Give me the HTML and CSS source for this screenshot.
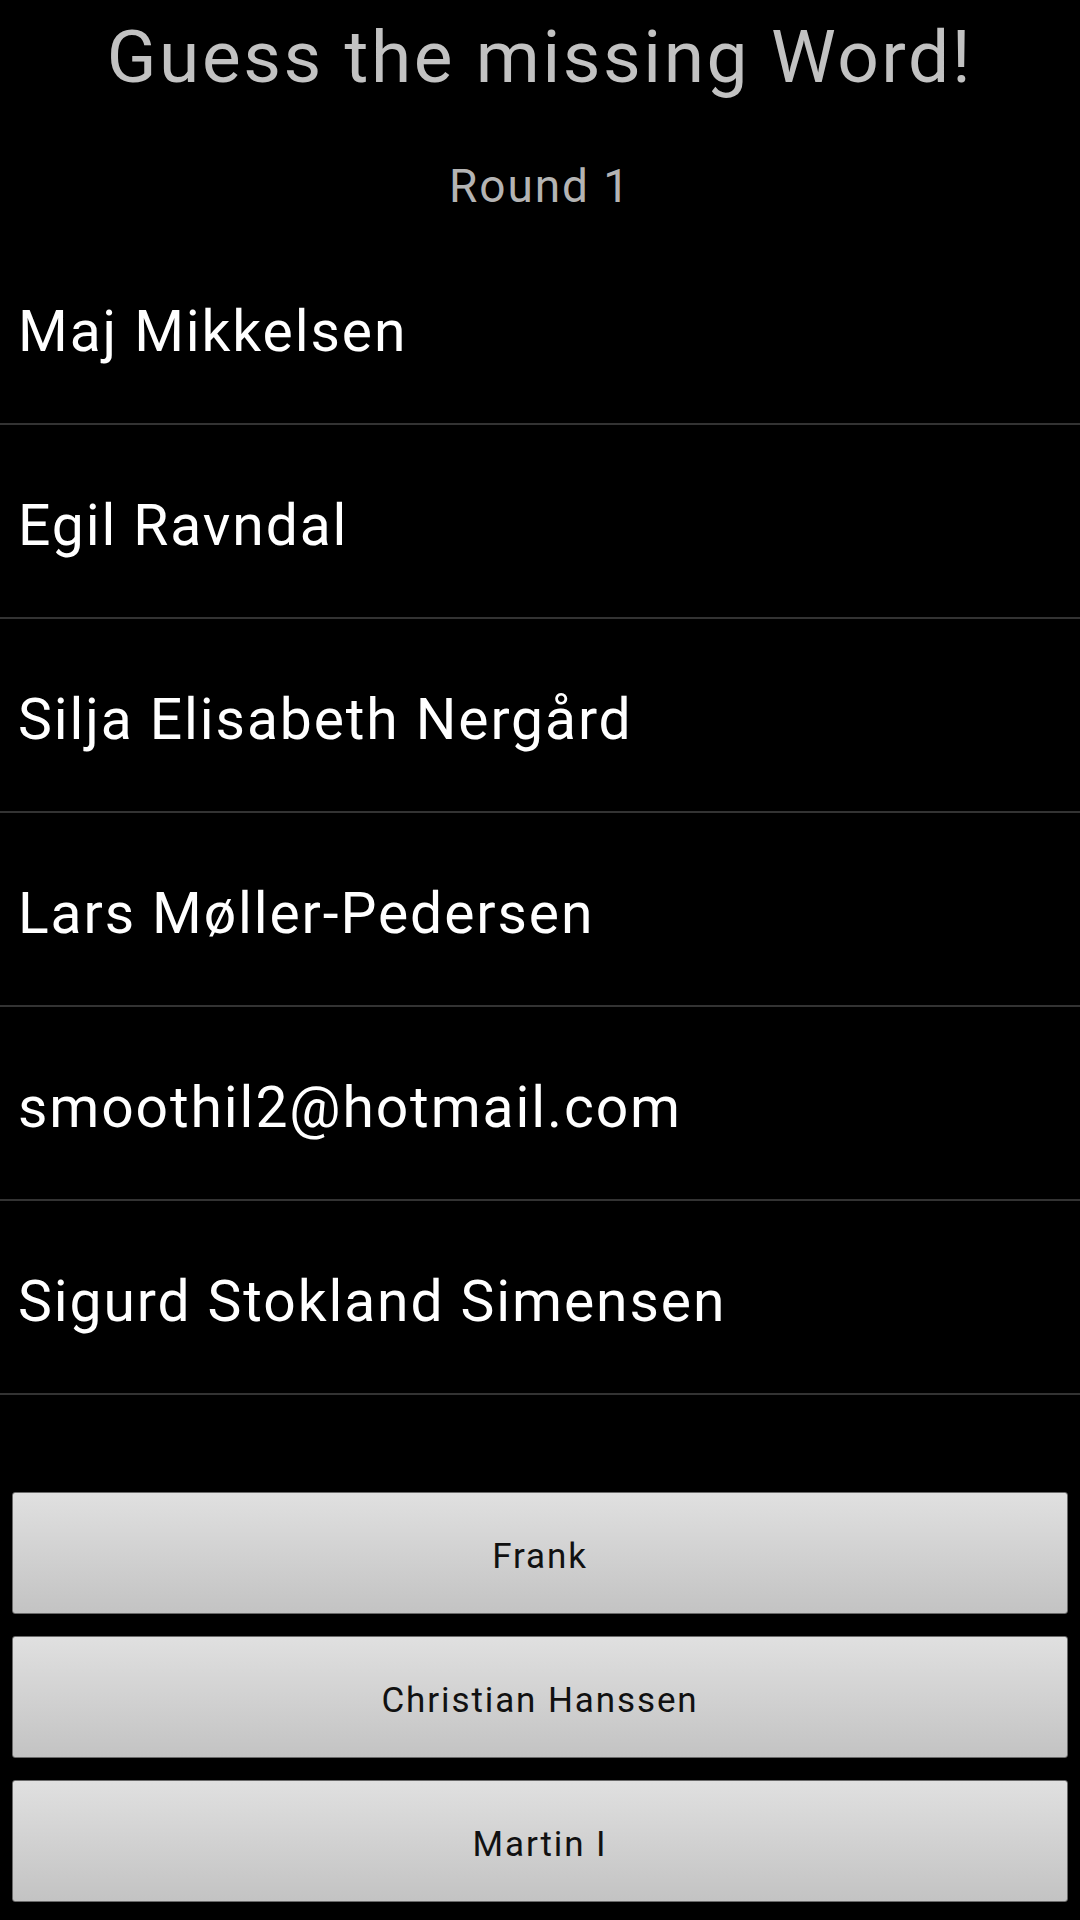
FILE: index.html
```html
<!DOCTYPE html>
<html lang="en">
<head>
<meta charset="utf-8">
<title>Guess the missing Word!</title>
<link rel="stylesheet" href="styles.css">
</head>
<body>
<div class="screen">
  <header class="header">
    <h1 class="title">Guess the missing Word!</h1>
    <div class="round">Round 1</div>
  </header>
  <ul class="list">
    <li class="row">Maj Mikkelsen</li>
    <li class="row">Egil Ravndal</li>
    <li class="row">Silja Elisabeth Nergård</li>
    <li class="row">Lars Møller-Pedersen</li>
    <li class="row">smoothil2@hotmail.com</li>
    <li class="row">Sigurd Stokland Simensen</li>
  </ul>
  <div class="answers">
    <button class="btn">Frank</button>
    <button class="btn">Christian Hanssen</button>
    <button class="btn">Martin I</button>
  </div>
</div>
</body>
</html>
```

FILE: styles.css
```css
html, body {
  margin: 0;
  padding: 0;
  background: #000;
}
body {
  font-family: Roboto, "Liberation Sans", sans-serif;
  width: 1080px;
  height: 1920px;
  overflow: hidden;
}
.screen {
  display: flex;
  flex-direction: column;
}
.header {
  display: flex;
  flex-direction: column;
  align-items: center;
  padding-bottom: 15px;
}
.title {
  margin: 0;
  padding-top: 7px;
  font-size: 73px;
  line-height: 100px;
  font-weight: 400;
  letter-spacing: 2.6px;
  color: #c2c2c2;
}
.round {
  margin-top: 49px;
  font-size: 46px;
  line-height: 60px;
  letter-spacing: 1.9px;
  color: #b4b4b4;
}
.list {
  list-style: none;
  margin: 0;
  padding: 0;
}
.row {
  box-sizing: content-box;
  display: flex;
  align-items: center;
  padding: 8px 0 0 18px;
  height: 184px;
  border-bottom: 2px solid #333;
  color: #fff;
  font-size: 57px;
  letter-spacing: 1.9px;
}
.answers {
  display: flex;
  flex-direction: column;
  gap: 22px;
  padding: 97px 12px 0;
}
.btn {
  box-sizing: border-box;
  height: 122px;
  width: 100%;
  margin: 0;
  padding: 6px 0 0;
  border: 1px solid #6a6a6a;
  border-radius: 3px;
  background: linear-gradient(#e0e0e0, #c3c3c3);
  color: #111;
  font-family: Roboto, "Liberation Sans", sans-serif;
  font-size: 35px;
  letter-spacing: 1.9px;
  text-align: center;
}
```
